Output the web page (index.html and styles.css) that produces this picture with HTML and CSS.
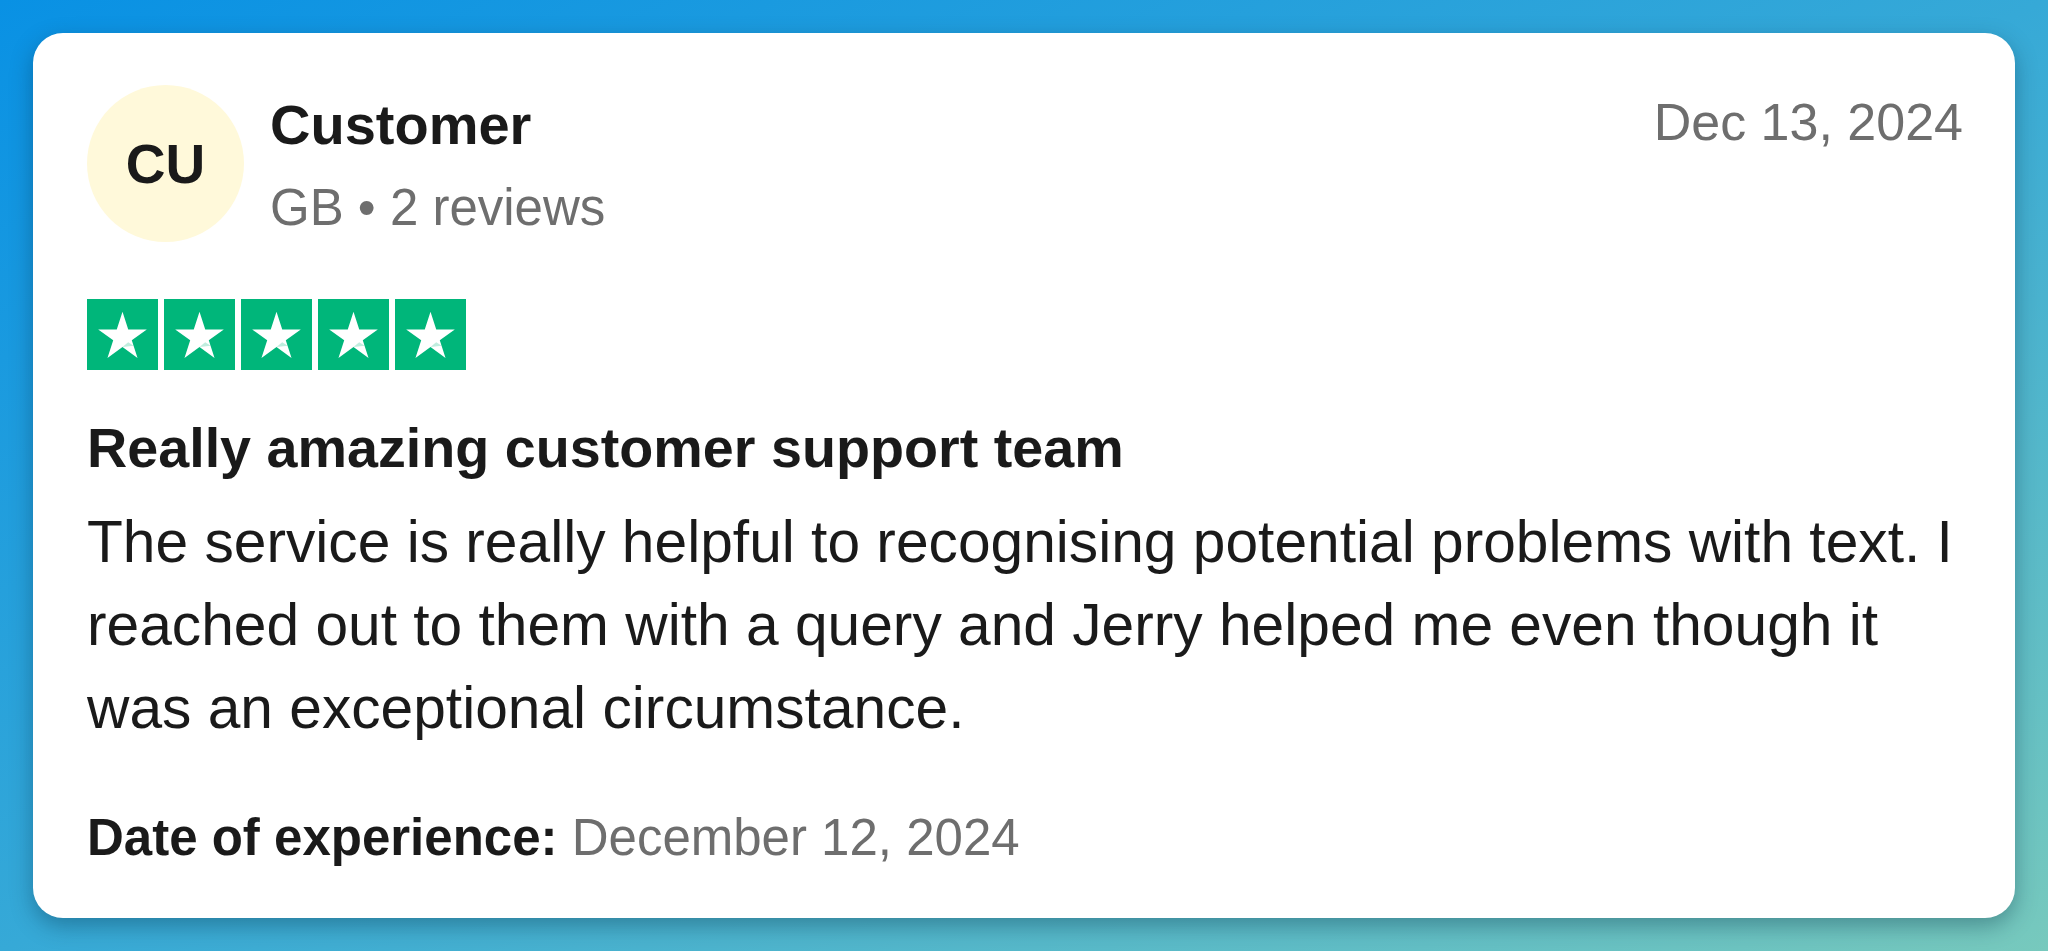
FILE: index.html
```html
<!DOCTYPE html>
<html lang="en">
<head>
    <meta charset="UTF-8">
    <meta name="viewport" content="width=device-width, initial-scale=1.0">
    <title>Review</title>
    <link rel="stylesheet" href="styles.css">
</head>
<body>
    <div class="review-card">
        <div class="review-header">
            <div class="avatar">CU</div>
            <div class="reviewer">
                <div class="reviewer-name">Customer</div>
                <div class="reviewer-meta">GB &bull; 2 reviews</div>
            </div>
            <div class="review-date">Dec 13, 2024</div>
        </div>

        <div class="stars">
            <svg class="star" viewBox="0 0 100 100"><rect width="100" height="100" fill="#00b67a"/><polygon points="50,18 58.08,42.88 84.24,42.88 63.08,58.25 71.16,83.12 50,67.75 28.84,83.12 36.92,58.25 15.76,42.88 41.92,42.88" fill="#fff"/><polygon points="58,61 66,66 50,67.75" fill="#00b67a" opacity="0.25"/></svg>
            <svg class="star" viewBox="0 0 100 100"><rect width="100" height="100" fill="#00b67a"/><polygon points="50,18 58.08,42.88 84.24,42.88 63.08,58.25 71.16,83.12 50,67.75 28.84,83.12 36.92,58.25 15.76,42.88 41.92,42.88" fill="#fff"/><polygon points="58,61 66,66 50,67.75" fill="#00b67a" opacity="0.25"/></svg>
            <svg class="star" viewBox="0 0 100 100"><rect width="100" height="100" fill="#00b67a"/><polygon points="50,18 58.08,42.88 84.24,42.88 63.08,58.25 71.16,83.12 50,67.75 28.84,83.12 36.92,58.25 15.76,42.88 41.92,42.88" fill="#fff"/><polygon points="58,61 66,66 50,67.75" fill="#00b67a" opacity="0.25"/></svg>
            <svg class="star" viewBox="0 0 100 100"><rect width="100" height="100" fill="#00b67a"/><polygon points="50,18 58.08,42.88 84.24,42.88 63.08,58.25 71.16,83.12 50,67.75 28.84,83.12 36.92,58.25 15.76,42.88 41.92,42.88" fill="#fff"/><polygon points="58,61 66,66 50,67.75" fill="#00b67a" opacity="0.25"/></svg>
            <svg class="star" viewBox="0 0 100 100"><rect width="100" height="100" fill="#00b67a"/><polygon points="50,18 58.08,42.88 84.24,42.88 63.08,58.25 71.16,83.12 50,67.75 28.84,83.12 36.92,58.25 15.76,42.88 41.92,42.88" fill="#fff"/><polygon points="58,61 66,66 50,67.75" fill="#00b67a" opacity="0.25"/></svg>
        </div>

        <h2 class="review-title">Really amazing customer support team</h2>
        <p class="review-text">The service is really helpful to recognising potential problems with text. I reached out to them with a query and Jerry helped me even though it was an exceptional circumstance.</p>

        <p class="experience"><strong>Date of experience:</strong> <span>December 12, 2024</span></p>
    </div>
</body>
</html>
```

FILE: styles.css
```css
* {
    margin: 0;
    padding: 0;
    box-sizing: border-box;
}

body {
    font-family: 'Liberation Sans', Arial, sans-serif;
    background: linear-gradient(to bottom right, #0991e4, #36a9d7 50%, #77c9bd);
    color: #1a1a1a;
    height: 100vh;
    padding: 33px;
    overflow: hidden;
}

.review-card {
    background-color: #ffffff;
    border-radius: 30px;
    height: 100%;
    padding: 52px 52px 50px 54px;
    box-shadow: 0 8px 22px rgba(0, 40, 60, 0.35);
}

.review-header {
    display: flex;
    align-items: flex-start;
}

.avatar {
    width: 157px;
    height: 157px;
    border-radius: 50%;
    background-color: #fff9da;
    display: flex;
    align-items: center;
    justify-content: center;
    font-size: 55px;
    font-weight: 700;
    flex-shrink: 0;
}

.reviewer {
    flex: 1;
    padding: 6px 0 0 26px;
}

.reviewer-name {
    font-size: 56px;
    font-weight: 700;
    line-height: 1.2;
}

.reviewer-meta {
    font-size: 51px;
    line-height: 1.2;
    color: #6e6e6e;
    margin-top: 19px;
}

.review-date {
    font-size: 52px;
    line-height: 1.2;
    color: #6e6e6e;
    padding-top: 6px;
}

.stars {
    display: flex;
    gap: 6px;
    margin-top: 57px;
}

.star {
    width: 71px;
    height: 71px;
    display: block;
}

.review-title {
    font-size: 55.7px;
    font-weight: 700;
    line-height: 1.2;
    margin-top: 45px;
}

.review-text {
    font-size: 58.7px;
    line-height: 83px;
    margin-top: 18px;
}

.experience {
    font-size: 51px;
    line-height: 1.2;
    margin-top: 58px;
}

.experience span {
    color: #6e6e6e;
}
```
